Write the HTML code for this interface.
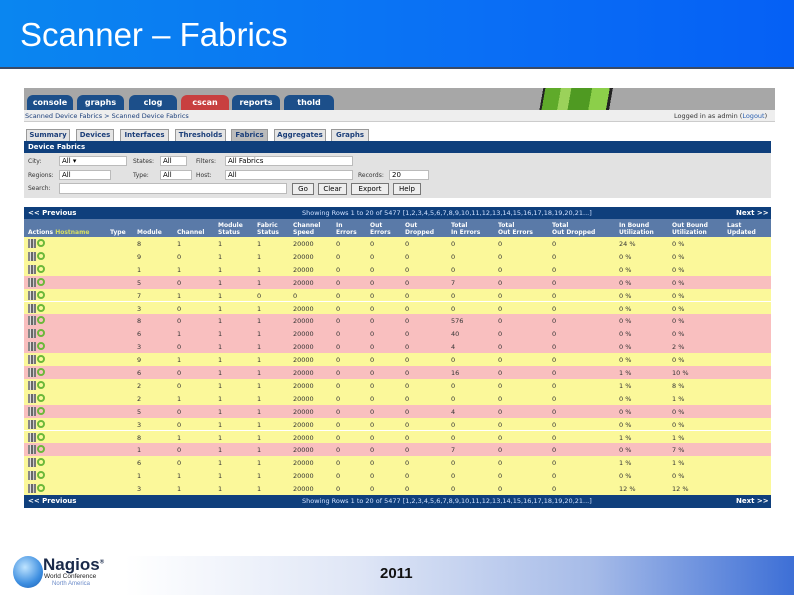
<!DOCTYPE html>
<html><head><meta charset="utf-8"><style>
*{margin:0;padding:0;box-sizing:border-box}
body{width:794px;height:595px;overflow:hidden;background:#fff;font-family:"Liberation Sans",sans-serif;position:relative}
.a{position:absolute}
#title{left:0;top:0;width:794px;height:69px;background:linear-gradient(90deg,#0a86f0,#0a6ff5 60%,#0560f5);border-bottom:2px solid #3a4a66}
#title span{position:absolute;left:20px;top:16px;color:#fff;font-size:33px}
.t{font-size:7px;font-family:"DejaVu Sans",sans-serif;white-space:nowrap}
.tab{position:absolute;top:95px;height:15px;border-radius:6px 6px 0 0;background:#1c4f8a;color:#fff;font-size:8px;font-weight:bold;text-align:center;line-height:15px;font-family:"DejaVu Sans",sans-serif}
.st{position:absolute;top:129px;height:12px;background:#e4e4e4;border:1px solid #999;border-bottom:none;color:#1c3f7a;font-size:7px;font-weight:bold;text-align:center;line-height:11px;font-family:"DejaVu Sans",sans-serif}
.sel{position:absolute;height:10px;background:#fff;border:1px solid #bbb;font-size:7px;line-height:8px;padding-left:2px;font-family:"DejaVu Sans",sans-serif}
.btn{position:absolute;top:183px;height:12px;background:#eee;border:1px solid #777;font-size:7px;line-height:10px;text-align:center;font-family:"DejaVu Sans",sans-serif}
.row{position:absolute;left:24px;width:747px;height:12.9px}
.c{position:absolute;font-size:6.5px;color:#333;font-family:"DejaVu Sans",sans-serif;top:3px}
.h{position:absolute;font-size:6px;color:#fff;font-weight:bold;font-family:"DejaVu Sans",sans-serif;line-height:7px}
</style></head><body>
<div id="title" class="a"><span>Scanner – Fabrics</span></div>

<div class="a" style="left:24px;top:88px;width:751px;height:22px;background:#a7a7a7"></div>
<div class="a" style="left:535px;top:88px;width:100px;height:22px;background:linear-gradient(100deg,#a7a7a7 0 8%,#222 8% 10%,#5faa2a 10% 25%,#9bd25a 25% 35%,#4f9a22 35% 55%,#8ccf4a 55% 72%,#222 72% 75%,#a7a7a7 75%)"></div>
<div class="tab" style="left:27px;width:46px">console</div>
<div class="tab" style="left:77px;width:47px">graphs</div>
<div class="tab" style="left:129px;width:48px">clog</div>
<div class="tab" style="left:181px;width:48px;background:#c84040">cscan</div>
<div class="tab" style="left:232px;width:48px">reports</div>
<div class="tab" style="left:284px;width:50px">thold</div>
<div class="a" style="left:24px;top:110px;width:751px;height:12px;background:#eeeeee;border-bottom:1px solid #ccc"></div>
<div class="a t" style="left:25px;top:112px;color:#1c3f7a;font-size:6.5px">Scanned Device Fabrics &gt; Scanned Device Fabrics</div>
<div class="a t" style="left:674px;top:112px;color:#333;font-size:6.5px">Logged in as admin (<span style="color:#2a5fb0">Logout</span>)</div>

<div class="st" style="left:26px;width:44px">Summary</div>
<div class="st" style="left:76px;width:38px">Devices</div>
<div class="st" style="left:120px;width:49px">Interfaces</div>
<div class="st" style="left:175px;width:51px">Thresholds</div>
<div class="st" style="left:231px;width:37px;background:#bbb">Fabrics</div>
<div class="st" style="left:274px;width:52px">Aggregates</div>
<div class="st" style="left:331px;width:38px">Graphs</div>

<div class="a" style="left:24px;top:141px;width:747px;height:12px;background:#0f3f7c"></div>
<div class="a t" style="left:28px;top:143px;color:#fff;font-weight:bold">Device Fabrics</div>
<div class="a" style="left:24px;top:153px;width:747px;height:45px;background:#e2e2e2"></div>
<div class="a t" style="left:28px;top:158px;color:#333;font-size:6px">City:</div>
<div class="sel" style="left:59px;top:156px;width:68px">All ▾</div>
<div class="a t" style="left:133px;top:158px;color:#333;font-size:6px">States:</div>
<div class="sel" style="left:160px;top:156px;width:27px">All</div>
<div class="a t" style="left:196px;top:158px;color:#333;font-size:6px">Filters:</div>
<div class="sel" style="left:225px;top:156px;width:128px">All Fabrics</div>
<div class="a t" style="left:28px;top:172px;color:#333;font-size:6px">Regions:</div>
<div class="sel" style="left:59px;top:170px;width:52px">All</div>
<div class="a t" style="left:133px;top:172px;color:#333;font-size:6px">Type:</div>
<div class="sel" style="left:160px;top:170px;width:32px">All</div>
<div class="a t" style="left:196px;top:172px;color:#333;font-size:6px">Host:</div>
<div class="sel" style="left:225px;top:170px;width:128px">All</div>
<div class="a t" style="left:358px;top:172px;color:#333;font-size:6px">Records:</div>
<div class="sel" style="left:389px;top:170px;width:40px">20</div>
<div class="a t" style="left:28px;top:185px;color:#333;font-size:6px">Search:</div>
<div class="sel" style="left:59px;top:183px;width:228px;height:11px"></div>
<div class="btn" style="left:292px;width:22px">Go</div>
<div class="btn" style="left:318px;width:29px">Clear</div>
<div class="btn" style="left:351px;width:38px">Export</div>
<div class="btn" style="left:393px;width:28px">Help</div>

<div class="a" style="left:24px;top:207px;width:747px;height:12px;background:#0f3f7c"></div>
<div class="a t" style="left:28px;top:209px;color:#fff;font-weight:bold">&lt;&lt; Previous</div>
<div class="a t" style="left:302px;top:209px;color:#cfe0ff;font-size:6.5px">Showing Rows 1 to 20 of 5477 [1,2,3,4,5,6,7,8,9,10,11,12,13,14,15,16,17,18,19,20,21...]</div>
<div class="a t" style="left:736px;top:209px;color:#fff;font-weight:bold">Next &gt;&gt;</div>
<div class="a" style="left:24px;top:219px;width:747px;height:18px;background:#5a7aa8"></div>
<div class="h" style="left:28px;top:229px">Actions <span style="color:#d8e060">Hostname</span></div>
<div class="h" style="left:110px;top:229px">Type</div>
<div class="h" style="left:137px;top:229px">Module</div>
<div class="h" style="left:177px;top:229px">Channel</div>
<div class="h" style="left:218px;top:222px">Module<br>Status</div>
<div class="h" style="left:257px;top:222px">Fabric<br>Status</div>
<div class="h" style="left:293px;top:222px">Channel<br>Speed</div>
<div class="h" style="left:336px;top:222px">In<br>Errors</div>
<div class="h" style="left:370px;top:222px">Out<br>Errors</div>
<div class="h" style="left:405px;top:222px">Out<br>Dropped</div>
<div class="h" style="left:451px;top:222px">Total<br>In Errors</div>
<div class="h" style="left:498px;top:222px">Total<br>Out Errors</div>
<div class="h" style="left:552px;top:222px">Total<br>Out Dropped</div>
<div class="h" style="left:619px;top:222px">In Bound<br>Utilization</div>
<div class="h" style="left:672px;top:222px">Out Bound<br>Utilization</div>
<div class="h" style="left:727px;top:222px">Last<br>Updated</div>

<div id="rows"></div>
<script>
var d=[["Y",8,1,1,1,20000,0,"24 %","0 %"],["Y",9,0,1,1,20000,0,"0 %","0 %"],["Y",1,1,1,1,20000,0,"0 %","0 %"],["P",5,0,1,1,20000,7,"0 %","0 %"],["Y",7,1,1,0,0,0,"0 %","0 %"],["Y",3,0,1,1,20000,0,"0 %","0 %"],["P",8,0,1,1,20000,576,"0 %","0 %"],["P",6,1,1,1,20000,40,"0 %","0 %"],["P",3,0,1,1,20000,4,"0 %","2 %"],["Y",9,1,1,1,20000,0,"0 %","0 %"],["P",6,0,1,1,20000,16,"1 %","10 %"],["Y",2,0,1,1,20000,0,"1 %","8 %"],["Y",2,1,1,1,20000,0,"0 %","1 %"],["P",5,0,1,1,20000,4,"0 %","0 %"],["Y",3,0,1,1,20000,0,"0 %","0 %"],["Y",8,1,1,1,20000,0,"1 %","1 %"],["P",1,0,1,1,20000,7,"0 %","7 %"],["Y",6,0,1,1,20000,0,"1 %","1 %"],["Y",1,1,1,1,20000,0,"0 %","0 %"],["Y",3,1,1,1,20000,0,"12 %","12 %"]];
var xs=[137,177,218,257,293,336,370,405,451,498,552,619,672],h="";
d.forEach(function(r,i){var top=237+i*12.9;h+='<div class="row" style="top:'+top+'px;background:'+(r[0]=="Y"?"#fbf89a":"#f9bfbf")+'">';
h+='<div class="a" style="left:4px;top:2px;width:8px;height:9px;background:linear-gradient(90deg,#888 0 25%,#ddd 25% 40%,#666 40% 60%,#ccc 60% 75%,#777 75%)"></div><div class="a" style="left:13px;top:2px;width:8px;height:8px;border:2px solid #6cb83a;border-radius:50%"></div>';
var v=[r[1],r[2],r[3],r[4],r[5],0,0,0,r[6],0,0,r[7],r[8]];
v.forEach(function(x,j){h+='<div class="c" style="left:'+(xs[j]-24)+'px">'+x+'</div>'});h+='</div>'});
document.getElementById("rows").innerHTML=h;
</script>
<div class="a" style="left:771px;top:207px;width:4px;height:301px;background:#fff"></div>
<div class="a" style="left:24px;top:495px;width:747px;height:13px;background:#0f3f7c"></div>
<div class="a t" style="left:28px;top:497px;color:#fff;font-weight:bold">&lt;&lt; Previous</div>
<div class="a t" style="left:302px;top:497px;color:#cfe0ff;font-size:6.5px">Showing Rows 1 to 20 of 5477 [1,2,3,4,5,6,7,8,9,10,11,12,13,14,15,16,17,18,19,20,21...]</div>
<div class="a t" style="left:736px;top:497px;color:#fff;font-weight:bold">Next &gt;&gt;</div>

<div class="a" style="left:125px;top:556px;width:669px;height:39px;background:linear-gradient(90deg,#fff 0%,#dfe6f6 35%,#a6bbe8 70%,#3d6fd6 100%)"></div>
<div class="a" style="left:380px;top:565px;font-size:15px;color:#111;font-weight:bold">2011</div>
<div class="a" style="left:13px;top:556px;width:30px;height:32px;border-radius:50%;background:radial-gradient(circle at 40% 35%,#bfe4ff,#3d8ee0 60%,#1a5cb0)"></div>
<div class="a" style="left:43px;top:555px;font-size:17px;font-weight:bold;color:#1a2a4a">Nagios<sup style="font-size:6px">®</sup></div>
<div class="a" style="left:44px;top:573px;font-size:6.5px;color:#222">World Conference</div>
<div class="a" style="left:52px;top:581px;font-size:6px;color:#6a8ac8">North America</div>
</body></html>
